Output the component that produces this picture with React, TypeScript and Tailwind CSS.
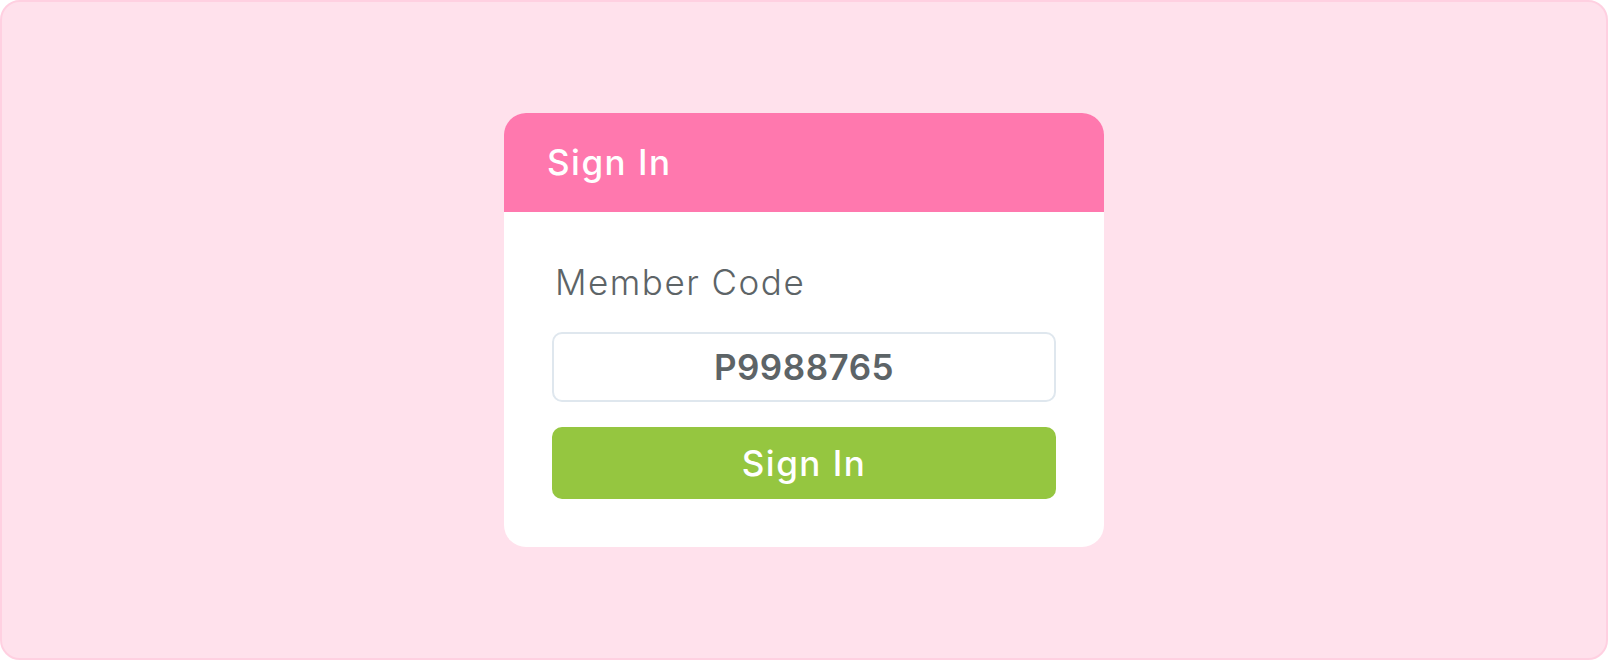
import React from "react"

const font = { fontFamily: 'Inter, "Noto Sans", sans-serif' }

const SignInCard = () => {
  return (
    <div className="w-[600px] rounded-[22px] overflow-hidden bg-white">
      <div className="h-[99px] bg-[#ff78ae] flex items-center px-[43px]">
        <h1 className="text-white text-[35px] leading-none font-medium tracking-[1.5px]">Sign In</h1>
      </div>
      <div className="flex flex-col px-12 pt-[53px] pb-12">
        <label className="text-[35px] leading-none font-light text-[#5d6467] pl-[3px] tracking-[1.5px]">Member Code</label>
        <div className="mt-[32px] h-[70px] rounded-[10px] border-2 border-[#dfe7ee] flex items-center justify-center">
          <span className="text-[35px] leading-none font-semibold text-[#5d6467] tracking-[0.5px]">P9988765</span>
        </div>
        <button className="mt-[25px] h-[72px] rounded-[10px] bg-[#95c640] text-white text-[35px] leading-none font-medium tracking-[1.5px]">
          Sign In
        </button>
      </div>
    </div>
  )
}

const App = () => {
  return (
    <div
      className="w-full h-[660px] bg-[#ffe1ec] border-2 border-[#ffd0e1] rounded-[20px] flex items-center justify-center"
      style={font}
    >
      <SignInCard />
    </div>
  )
}

export default App
